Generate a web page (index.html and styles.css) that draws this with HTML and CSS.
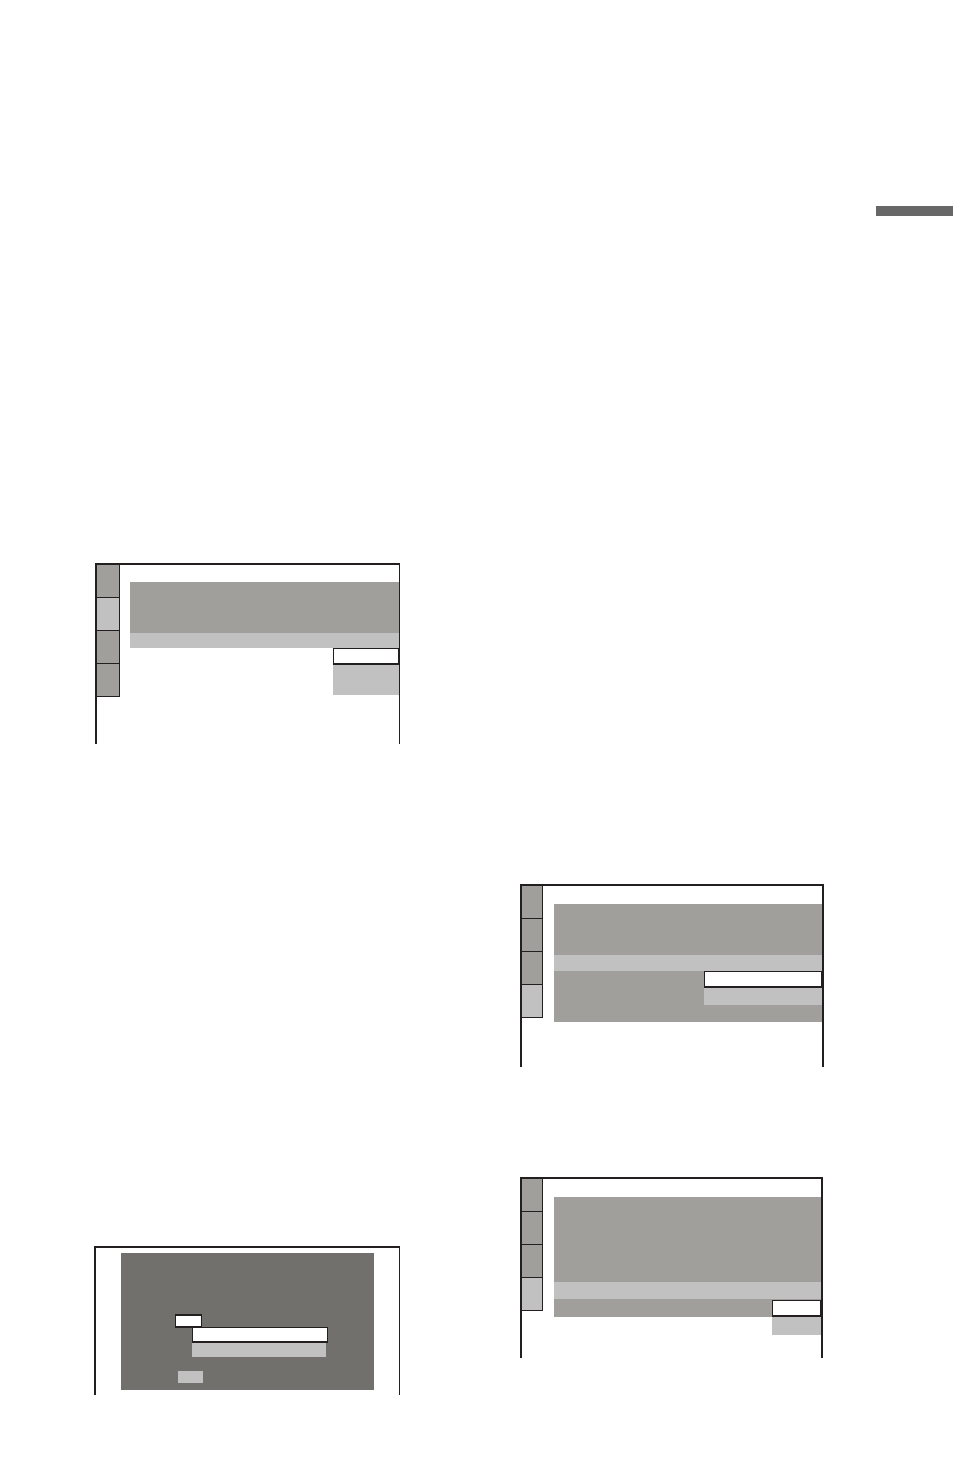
FILE: index.html
```html
<!DOCTYPE html>
<html lang="en">
<head>
<meta charset="utf-8">
<title>Setup screens</title>
<link rel="stylesheet" href="styles.css">
</head>
<body>
<div class="edge-tab"></div>
<div class="columns">
  <div class="col col-left">
    <div class="screen screen-a">
      <div class="tabs">
        <div class="tab"></div>
        <div class="tab tab-on"></div>
        <div class="tab"></div>
        <div class="tab"></div>
      </div>
      <div class="main main-a">
        <div class="band-dark h51"></div>
        <div class="band-light h15"></div>
        <div class="opts opts-a">
          <div class="opt-sel"></div>
          <div class="opt-light h30"></div>
        </div>
      </div>
    </div>

    <div class="screen screen-d">
      <div class="panel">
        <div class="mini-sel"></div>
        <div class="wide-sel"></div>
        <div class="wide-light"></div>
        <div class="mini-light"></div>
      </div>
    </div>
  </div>

  <div class="col col-right">
    <div class="screen screen-b">
      <div class="tabs tabs-b">
        <div class="tab"></div>
        <div class="tab"></div>
        <div class="tab"></div>
        <div class="tab tab-on"></div>
      </div>
      <div class="main main-b">
        <div class="block-dark">
          <div class="h51"></div>
          <div class="band-light h16"></div>
          <div class="opts opts-b">
            <div class="opt-sel h17"></div>
            <div class="opt-light h17"></div>
          </div>
          <div class="h17"></div>
        </div>
      </div>
    </div>

    <div class="screen screen-c">
      <div class="tabs tabs-b">
        <div class="tab"></div>
        <div class="tab"></div>
        <div class="tab"></div>
        <div class="tab tab-on"></div>
      </div>
      <div class="main main-b">
        <div class="band-dark h85"></div>
        <div class="band-light h17"></div>
        <div class="row-dark">
          <div class="opt-sel opt-c"></div>
        </div>
        <div class="opts opts-c">
          <div class="opt-light h18"></div>
        </div>
      </div>
    </div>
  </div>
</div>
</body>
</html>
```

FILE: styles.css
```css
html, body {
  margin: 0;
  padding: 0;
  background: #ffffff;
  font-family: "Liberation Sans", Arial, sans-serif;
}

.edge-tab {
  margin: 206px 1px 0 876px;
  height: 10px;
  background: #676767;
}

.columns {
  display: flex;
  align-items: flex-start;
}

.col {
  display: flex;
  flex-direction: column;
}

.col-left {
  margin-left: 95px;
  padding-top: 347px;
  width: 305px;
}

.col-right {
  margin-left: 120px;
  padding-top: 668px;
  width: 304px;
}

.screen {
  box-sizing: border-box;
  display: flex;
  align-items: flex-start;
  border-top: 2px solid #231f20;
  border-left: 2px solid #231f20;
  border-right: 1px solid #231f20;
}

.screen-a { height: 181px; }
.screen-d { height: 149px; margin-top: 502px; margin-left: -1px; }
.screen-b { height: 183px; border-right-width: 2px; }
.screen-c { height: 181px; margin-top: 110px; width: 303px; border-right-width: 2px; }

.tabs {
  display: flex;
  flex-direction: column;
  width: 23px;
  flex: none;
}
.tabs-b { width: 21px; }

.tab {
  box-sizing: border-box;
  height: 33px;
  background: #a19f9c;
  border-right: 1px solid #231f20;
  border-bottom: 1px solid #231f20;
}
.tab-on { background: #c1c1c1; }

.main {
  flex: 1;
  display: flex;
  flex-direction: column;
}
.main-a { margin-left: 10px; padding-top: 17px; }
.main-b { margin-left: 11px; padding-top: 18px; }

.band-dark, .block-dark, .row-dark { background: #a19f9c; }
.band-light { background: #c1c1c1; }

.block-dark {
  display: flex;
  flex-direction: column;
}

.h15 { height: 15px; }
.h16 { height: 16px; }
.h17 { height: 17px; }
.h18 { height: 18px; }
.h30 { height: 30px; }
.h51 { height: 51px; }
.h85 { height: 85px; }

.opts {
  display: flex;
  flex-direction: column;
  align-self: flex-end;
}
.opts-a { width: 66px; }
.opts-b { width: 118px; }
.opts-c { width: 49px; }

.opt-sel {
  box-sizing: border-box;
  height: 17px;
  background: #ffffff;
  border: 1px solid #231f20;
  border-bottom-width: 2px;
}
.opt-light { background: #c1c1c1; }

.row-dark {
  height: 18px;
  display: flex;
  justify-content: flex-end;
  align-items: flex-start;
}
.opt-c { width: 49px; margin-top: 1px; }

.panel {
  box-sizing: border-box;
  width: 253px;
  height: 137px;
  margin: 5px 0 0 25px;
  padding-top: 61px;
  background: #72706d;
  display: flex;
  flex-direction: column;
  align-items: flex-start;
}

.mini-sel {
  box-sizing: border-box;
  width: 27px;
  height: 14px;
  margin-left: 54px;
  background: #ffffff;
  border: 1px solid #231f20;
  border-width: 2px 1px 2px 1px;
}

.wide-sel {
  box-sizing: border-box;
  width: 136px;
  height: 16px;
  margin: -1px 0 0 71px;
  background: #ffffff;
  border: 1px solid #231f20;
  border-bottom-width: 2px;
}

.wide-light {
  width: 134px;
  height: 14px;
  margin-left: 71px;
  background: #c1c1c1;
}

.mini-light {
  width: 25px;
  height: 12px;
  margin: 14px 0 0 57px;
  background: #c1c1c1;
}
```
